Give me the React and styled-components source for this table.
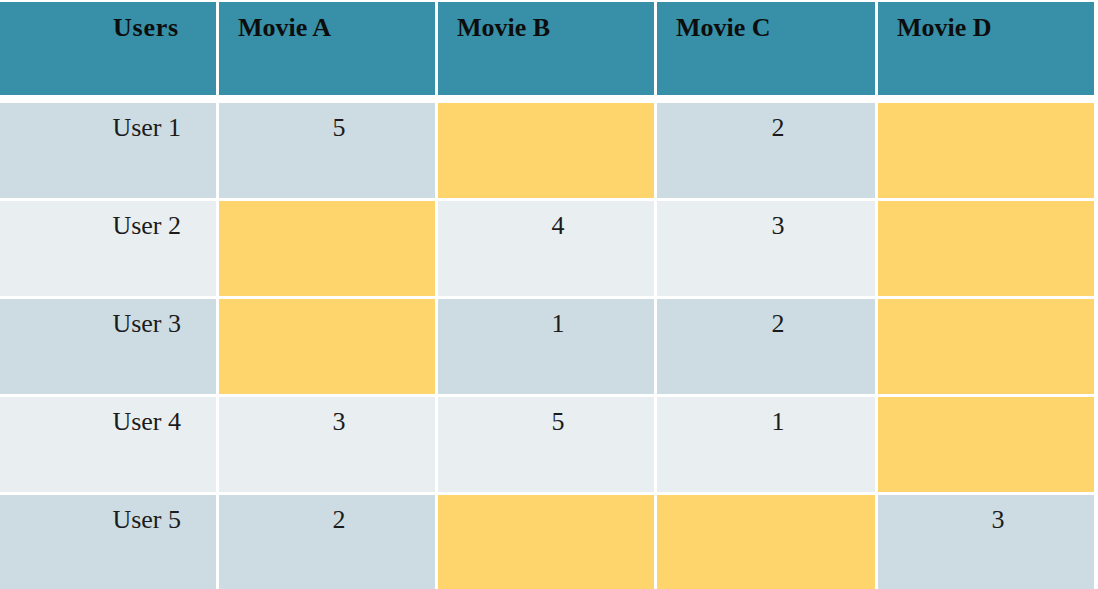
import React from "react";
import styled, { createGlobalStyle } from "styled-components";

const GlobalStyle = createGlobalStyle`
  html, body {
    margin: 0;
    padding: 0;
    background: #ffffff;
  }
`;

const Page = styled.div`
  padding-top: 2px;
  font-family: "Liberation Serif", "Times New Roman", serif;
  color: #1b1b1b;
`;

const Grid = styled.div`
  display: grid;
  grid-template-columns: 216px 216px 216px 218px 216px;
  grid-template-rows: 98px repeat(5, 95px);
  column-gap: 3px;
  row-gap: 3px;
  width: 1094px;
`;

const HeaderCell = styled.div`
  background: #3790a7;
  font-size: 26px;
  font-weight: 700;
  line-height: 30px;
  padding: 11px ${(p) => (p.$first ? "37px" : "0")} 0
    ${(p) => (p.$first ? "0" : "19px")};
  text-align: ${(p) => (p.$first ? "right" : "left")};
  letter-spacing: ${(p) => (p.$first ? "0.8px" : "0")};
  color: #0d0d0d;
  margin-bottom: 5px;
`;

const rowColors = {
  dark: "#cddce3",
  light: "#e9eef1",
  empty: "#fed46d",
};

const Cell = styled.div`
  background: ${(p) => rowColors[p.$tone]};
  font-size: 26px;
  line-height: 30px;
  padding-top: 10px;
  padding-left: ${(p) => (p.$label ? "0" : "24px")};
  padding-right: ${(p) => (p.$label ? "35px" : "0")};
  text-align: ${(p) => (p.$label ? "right" : "center")};
`;

const movies = ["Movie A", "Movie B", "Movie C", "Movie D"];

const ratings = [
  [5, null, 2, null],
  [null, 4, 3, null],
  [null, 1, 2, null],
  [3, 5, 1, null],
  [2, null, null, 3],
];

function App() {
  return (
    <Page>
      <GlobalStyle />
      <Grid>
        <HeaderCell $first>Users</HeaderCell>
        {movies.map((m) => (
          <HeaderCell key={m}>{m}</HeaderCell>
        ))}
        {ratings.map((row, i) => {
          const tone = i % 2 === 0 ? "dark" : "light";
          return (
            <React.Fragment key={i}>
              <Cell $label $tone={tone}>
                User {i + 1}
              </Cell>
              {row.map((r, j) => (
                <Cell key={j} $tone={r === null ? "empty" : tone}>
                  {r}
                </Cell>
              ))}
            </React.Fragment>
          );
        })}
      </Grid>
    </Page>
  );
}

export default App;
